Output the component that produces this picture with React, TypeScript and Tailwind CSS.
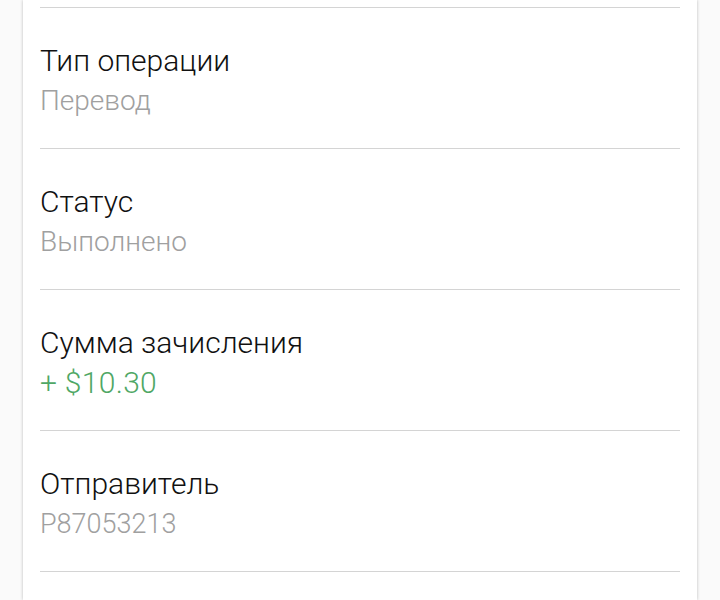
import React from "react";

const rows = [
  { label: "Тип операции", value: "Перевод", tone: "text-[#a0a0a0] text-[28px]" },
  { label: "Статус", value: "Выполнено", tone: "text-[#a0a0a0] text-[28px]" },
  { label: "Сумма зачисления", value: "+ $10.30", tone: "text-[#4fa765] text-[30px] tracking-[0.3px]" },
  { label: "Отправитель", value: "P87053213", tone: "text-[#a0a0a0] text-[27px]" },
];

export default function App() {
  return (
    <div className="w-[720px] h-[600px] overflow-hidden bg-[#fafafa] flex justify-center" style={{ fontFamily: "Roboto, 'Noto Sans', sans-serif" }}>
      <div className="w-[674px] h-full bg-white shadow-[0_0_3px_rgba(0,0,0,0.25)] px-[17px]">
        <div className="h-[7px]" />
        <div className="h-px bg-[#d4d4d4]" />
        {rows.map((r) => (
          <div key={r.label}>
            <div className="h-[140px] pt-[38px] font-light">
              <div className="text-[30px] leading-[30px] text-[#111]">{r.label}</div>
              <div className={`leading-[28px] mt-[11px] ${r.tone}`}>{r.value}</div>
            </div>
            <div className="h-px bg-[#d4d4d4]" />
          </div>
        ))}
      </div>
    </div>
  );
}
